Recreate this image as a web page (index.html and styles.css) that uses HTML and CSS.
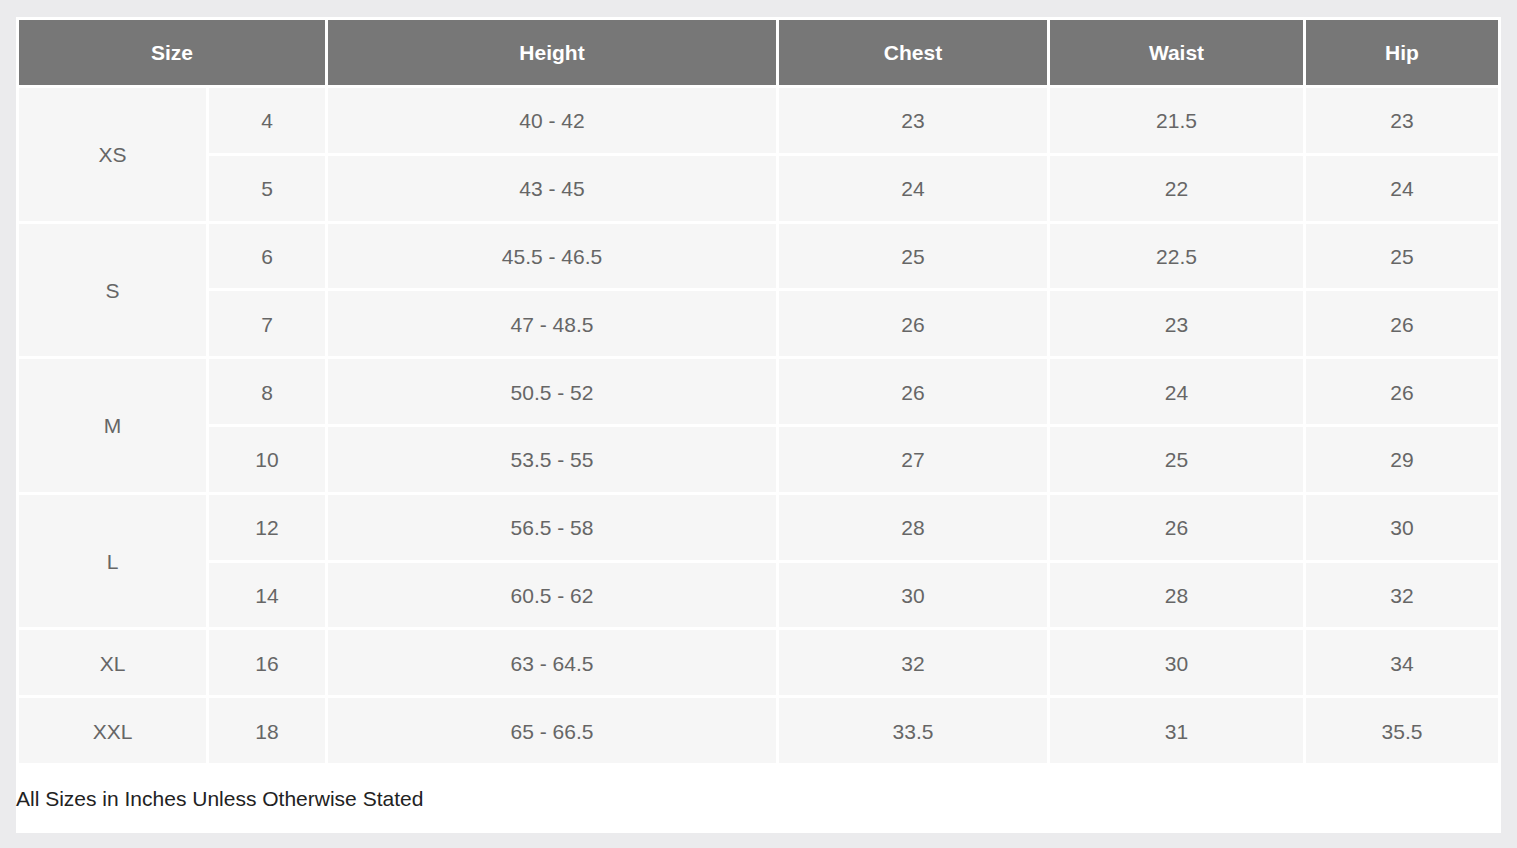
FILE: index.html
```html
<!DOCTYPE html>
<html>
<head>
<meta charset="utf-8">
<link rel="stylesheet" href="styles.css">
</head>
<body>
<div class="panel">
  <table class="chart">
    <colgroup>
      <col class="c1"><col class="c2"><col class="c3"><col class="c4"><col class="c5"><col class="c6">
    </colgroup>
    <thead>
      <tr><th colspan="2">Size</th><th>Height</th><th>Chest</th><th>Waist</th><th>Hip</th></tr>
    </thead>
    <tbody>
      <tr><td rowspan="2">XS</td><td>4</td><td>40 - 42</td><td>23</td><td>21.5</td><td>23</td></tr>
      <tr><td>5</td><td>43 - 45</td><td>24</td><td>22</td><td>24</td></tr>
      <tr><td rowspan="2">S</td><td>6</td><td>45.5 - 46.5</td><td>25</td><td>22.5</td><td>25</td></tr>
      <tr><td>7</td><td>47 - 48.5</td><td>26</td><td>23</td><td>26</td></tr>
      <tr><td rowspan="2">M</td><td>8</td><td>50.5 - 52</td><td>26</td><td>24</td><td>26</td></tr>
      <tr><td>10</td><td>53.5 - 55</td><td>27</td><td>25</td><td>29</td></tr>
      <tr><td rowspan="2">L</td><td>12</td><td>56.5 - 58</td><td>28</td><td>26</td><td>30</td></tr>
      <tr><td>14</td><td>60.5 - 62</td><td>30</td><td>28</td><td>32</td></tr>
      <tr><td>XL</td><td>16</td><td>63 - 64.5</td><td>32</td><td>30</td><td>34</td></tr>
      <tr><td>XXL</td><td>18</td><td>65 - 66.5</td><td>33.5</td><td>31</td><td>35.5</td></tr>
    </tbody>
  </table>
  <p class="note">All Sizes in Inches Unless Otherwise Stated</p>
</div>
</body>
</html>
```
FILE: styles.css
```css
html, body {
  margin: 0;
  padding: 0;
  background: #ebebed;
  font-family: "Liberation Sans", Arial, sans-serif;
}
body {
  padding: 17px 0 0 16px;
  height: 848px;
  box-sizing: border-box;
  overflow: hidden;
}
.panel {
  width: 1485px;
  height: 816px;
  background: #ffffff;
}
.chart {
  border-collapse: separate;
  border-spacing: 3px;
  table-layout: fixed;
  width: 1485px;
  margin: 0;
}
.c1 { width: 187px; }
.c2 { width: 116px; }
.c3 { width: 448px; }
.c4 { width: 268px; }
.c5 { width: 253px; }
.c6 { width: 192px; }
.chart th {
  background: #777777;
  color: #ffffff;
  font-weight: bold;
  font-size: 21px;
  line-height: 24px;
  height: 65px;
  padding: 0;
  box-sizing: border-box;
  text-align: center;
  vertical-align: middle;
}
.chart td {
  background: #f6f6f6;
  color: #666666;
  font-size: 21px;
  line-height: 24px;
  height: 64.8px;
  padding: 2px 0 0 0;
  box-sizing: border-box;
  text-align: center;
  vertical-align: middle;
}
.note {
  margin: 21px 0 0 0;
  font-size: 21px;
  line-height: 24px;
  color: #222222;
}
```
